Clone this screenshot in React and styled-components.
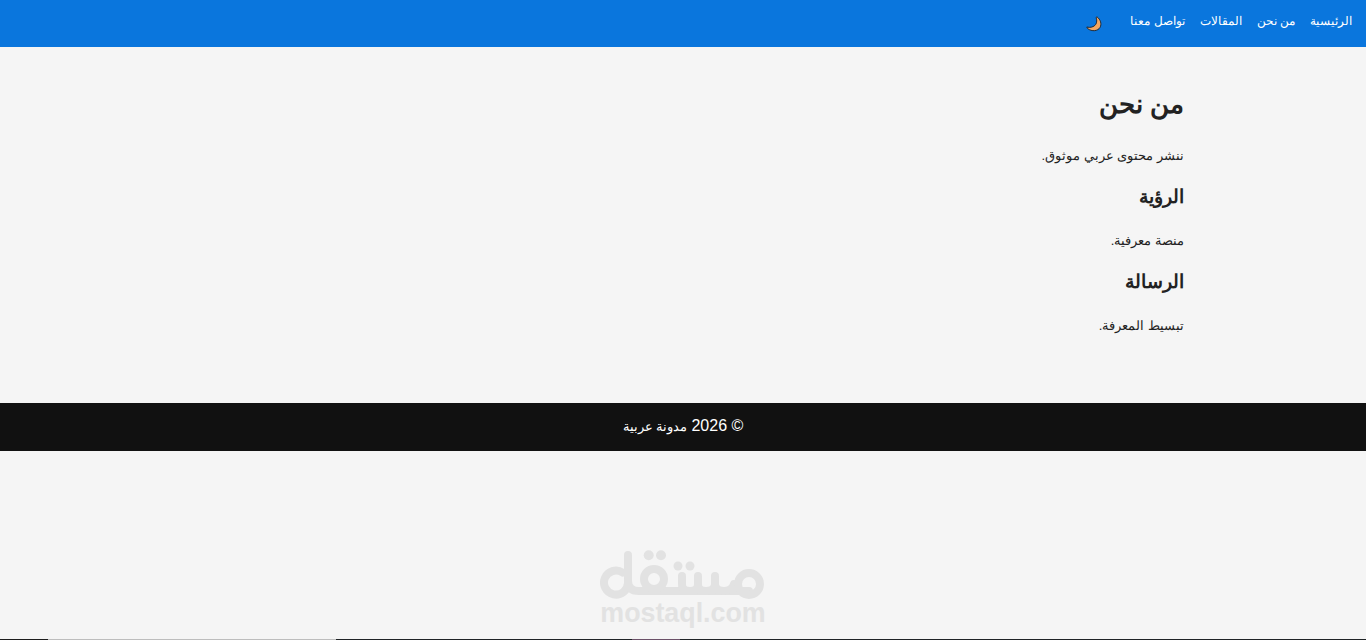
import React from 'react'
import styled, { createGlobalStyle } from 'styled-components'

const GlobalStyle = createGlobalStyle`
    html, body {
        margin: 0;
        height: 640px;
        overflow: hidden;
        background: #f5f5f5;
    }
    body {
        font-family: "Liberation Sans", Arial, sans-serif;
        font-size: 14px;
        color: #222;
    }
`

const Page = styled.div`
    position: relative;
    direction: rtl;
    height: 640px;
    overflow: hidden;
`

const Header = styled.header`
    height: 47px;
    background: #0a76dd;
    display: flex;
    align-items: center;
    gap: 28px;
    padding: 0 14px;
`

const NavList = styled.nav`
    display: flex;
    gap: 15px;
    padding-bottom: 5px;
`

const NavLink = styled.a`
    color: #fff;
    font-size: 12.3px;
    text-decoration: none;
`

const ThemeToggle = styled.button`
    display: flex;
    align-items: center;
    padding: 0;
    border: 0;
    background: none;
`

const Main = styled.main`
    box-sizing: border-box;
    width: 1002px;
    height: 356px;
    margin: 0 auto;
    padding-top: 39px;
`

const Heading = styled.h1`
    margin: 0 0 23px;
    font-size: 25.5px;
    line-height: 36px;
`

const SubHeading = styled.h2`
    margin: 0 0 19px;
    font-size: 19px;
    line-height: 28px;
`

const Paragraph = styled.p`
    margin: 0 0 17px;
    font-size: 13px;
    line-height: 21px;
`

const Footer = styled.footer`
    box-sizing: border-box;
    height: 48px;
    padding-bottom: 2px;
    display: flex;
    align-items: center;
    justify-content: center;
    gap: 4px;
    background: #111;
    color: #fff;
    font-size: 16px;
`

const FooterBrand = styled.span`
    font-size: 13.3px;
`

const Watermark = styled.div`
    position: absolute;
    left: 600px;
    top: 548px;
    width: 166px;
    direction: ltr;
    display: flex;
    flex-direction: column;
    align-items: center;
    pointer-events: none;
`

const WatermarkText = styled.span`
    color: #e2e2e2;
    font-size: 26.8px;
    line-height: 26px;
    font-weight: 700;
`

const BottomStrip = styled.div`
    position: absolute;
    left: 0;
    right: 0;
    bottom: 0;
    height: 1px;
    direction: ltr;
    display: flex;
`

const StripPart = styled.div`
    width: ${p => p.$width}px;
    flex: ${p => (p.$grow ? 1 : 'none')};
    background: ${p => p.$color};
`

const MoonIcon = () => (
    <svg width="16" height="16" viewBox="0 0 16 16">
        <path
            d="M11 0.8 C14.5 3.5 16 8 14 11.5 C12 15 6 16 1.5 12.5 L0.8 11 C4 12 8 11 9.7 8.5 C11 6.5 11 3.5 10 1.5 Z"
            fill="#f4a660"
            stroke="#1d2a3a"
            strokeWidth="1"
        />
    </svg>
)

const MostaqlLogo = () => (
    <svg width="166" height="52" viewBox="0 0 166 52" fill="none" stroke="#e2e2e2" strokeWidth="8" strokeLinecap="round" strokeLinejoin="round">
        <path d="M22.5 24.5 A12 12 0 1 0 28 35 V7" />
        <path d="M28 33 Q28 43 39 43 H149" />
        <circle cx="54" cy="31" r="10" />
        <path d="M82 28 V36 Q82 43 90 43 Q98 43 98 36 V28 M98 36 Q98 43 106 43 Q115 43 115 36 V28 M115 36 Q115 43 124 43 Q132 43 134 36" />
        <circle cx="149" cy="36" r="11" />
        <g fill="#e2e2e2" stroke="none">
            <circle cx="48.7" cy="7.3" r="5" />
            <circle cx="61" cy="7.3" r="5" />
            <circle cx="78" cy="18" r="4.5" />
            <circle cx="90" cy="18" r="4.5" />
        </g>
    </svg>
)

const links = ['الرئيسية', 'من نحن', 'المقالات', 'تواصل معنا']
const strip = [
    { width: 48, color: '#1c1c1c' },
    { width: 288, color: '#bdbdbd' },
    { width: 296, color: '#1f2326' },
    { width: 48, color: '#6b5068' },
]

const App = () => {
    return (
        <Page>
            <GlobalStyle />
            <Header>
                <NavList>
                    {links.map(link => <NavLink href="#" key={link}>{link}</NavLink>)}
                </NavList>
                <ThemeToggle aria-label="theme"><MoonIcon /></ThemeToggle>
            </Header>
            <Main>
                <Heading>من نحن</Heading>
                <Paragraph>ننشر محتوى عربي موثوق.</Paragraph>
                <SubHeading>الرؤية</SubHeading>
                <Paragraph>منصة معرفية.</Paragraph>
                <SubHeading>الرسالة</SubHeading>
                <Paragraph>تبسيط المعرفة.</Paragraph>
            </Main>
            <Footer><span>© 2026</span><FooterBrand>مدونة عربية</FooterBrand></Footer>
            <Watermark>
                <MostaqlLogo />
                <WatermarkText>mostaql.com</WatermarkText>
            </Watermark>
            <BottomStrip>
                {strip.map(part => <StripPart key={part.width + part.color} $width={part.width} $color={part.color} />)}
                <StripPart $grow $color="#1f2326" />
            </BottomStrip>
        </Page>
    )
}

export default App
